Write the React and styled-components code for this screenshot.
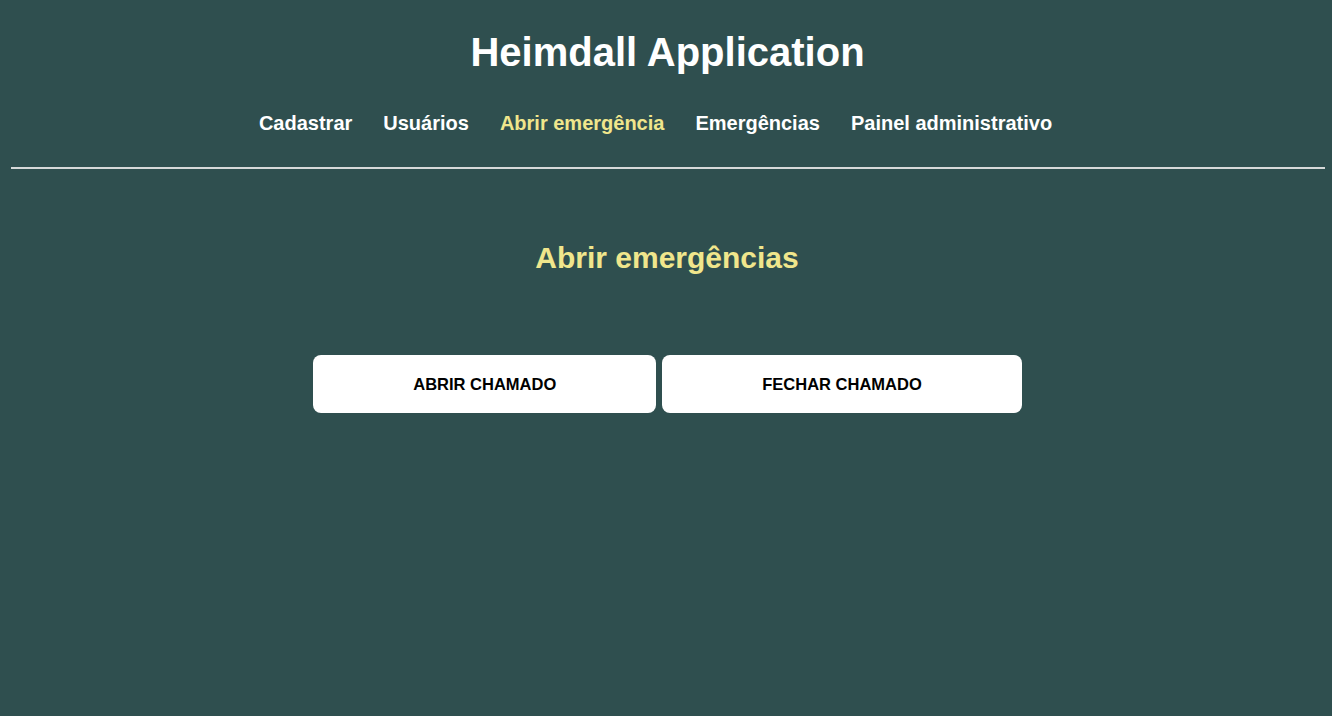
import React from 'react';
import styled, { createGlobalStyle } from 'styled-components';

const GlobalStyle = createGlobalStyle`
  html, body {
    margin: 0;
    padding: 0;
    background-color: #2f4f4f;
    font-family: 'Liberation Sans', Arial, sans-serif;
  }
`;

const Page = styled.div`
  min-height: 716px;
  background-color: #2f4f4f;
  display: flex;
  flex-direction: column;
  align-items: center;
`;

const Header = styled.header`
  width: 100%;
  display: flex;
  flex-direction: column;
  align-items: center;
  padding-top: 29px;
`;

const Title = styled.h1`
  margin: 0 0 0 3px;
  font-size: 40px;
  line-height: 46px;
  font-weight: 700;
  color: #fff;
`;

const Nav = styled.nav`
  display: flex;
  gap: 31px;
  margin: 37px 21px 0 0;
`;

const NavLink = styled.a`
  font-size: 20px;
  line-height: 23px;
  font-weight: 700;
  color: ${(p) => (p.$active ? '#f0e68c' : '#fff')};
  text-decoration: none;
  cursor: pointer;
`;

const Divider = styled.hr`
  align-self: stretch;
  margin: 32px 7px 0 11px;
  border: none;
  border-top: 2px solid #d6d9d9;
`;

const Heading = styled.h2`
  margin: 72px 0 0 2px;
  font-size: 30px;
  line-height: 34px;
  font-weight: 700;
  color: #f0e68c;
`;

const ButtonRow = styled.div`
  display: flex;
  gap: 6px;
  margin-top: 80px;
  margin-left: 3px;
`;

const Button = styled.button`
  background: #fff;
  border: none;
  border-radius: 8px;
  padding: 20px 100px;
  font-family: 'Liberation Sans', Arial, sans-serif;
  font-size: 16.5px;
  line-height: 18px;
  font-weight: 700;
  color: #000;
  cursor: pointer;
`;

const links = ['Cadastrar', 'Usuários', 'Abrir emergência', 'Emergências', 'Painel administrativo'];

export default function App() {
  return (
    <Page>
      <GlobalStyle />
      <Header>
        <Title>Heimdall Application</Title>
        <Nav>
          {links.map((l) => (
            <NavLink key={l} $active={l === 'Abrir emergência'}>
              {l}
            </NavLink>
          ))}
        </Nav>
      </Header>
      <Divider />
      <Heading>Abrir emergências</Heading>
      <ButtonRow>
        <Button>ABRIR CHAMADO</Button>
        <Button>FECHAR CHAMADO</Button>
      </ButtonRow>
    </Page>
  );
}
